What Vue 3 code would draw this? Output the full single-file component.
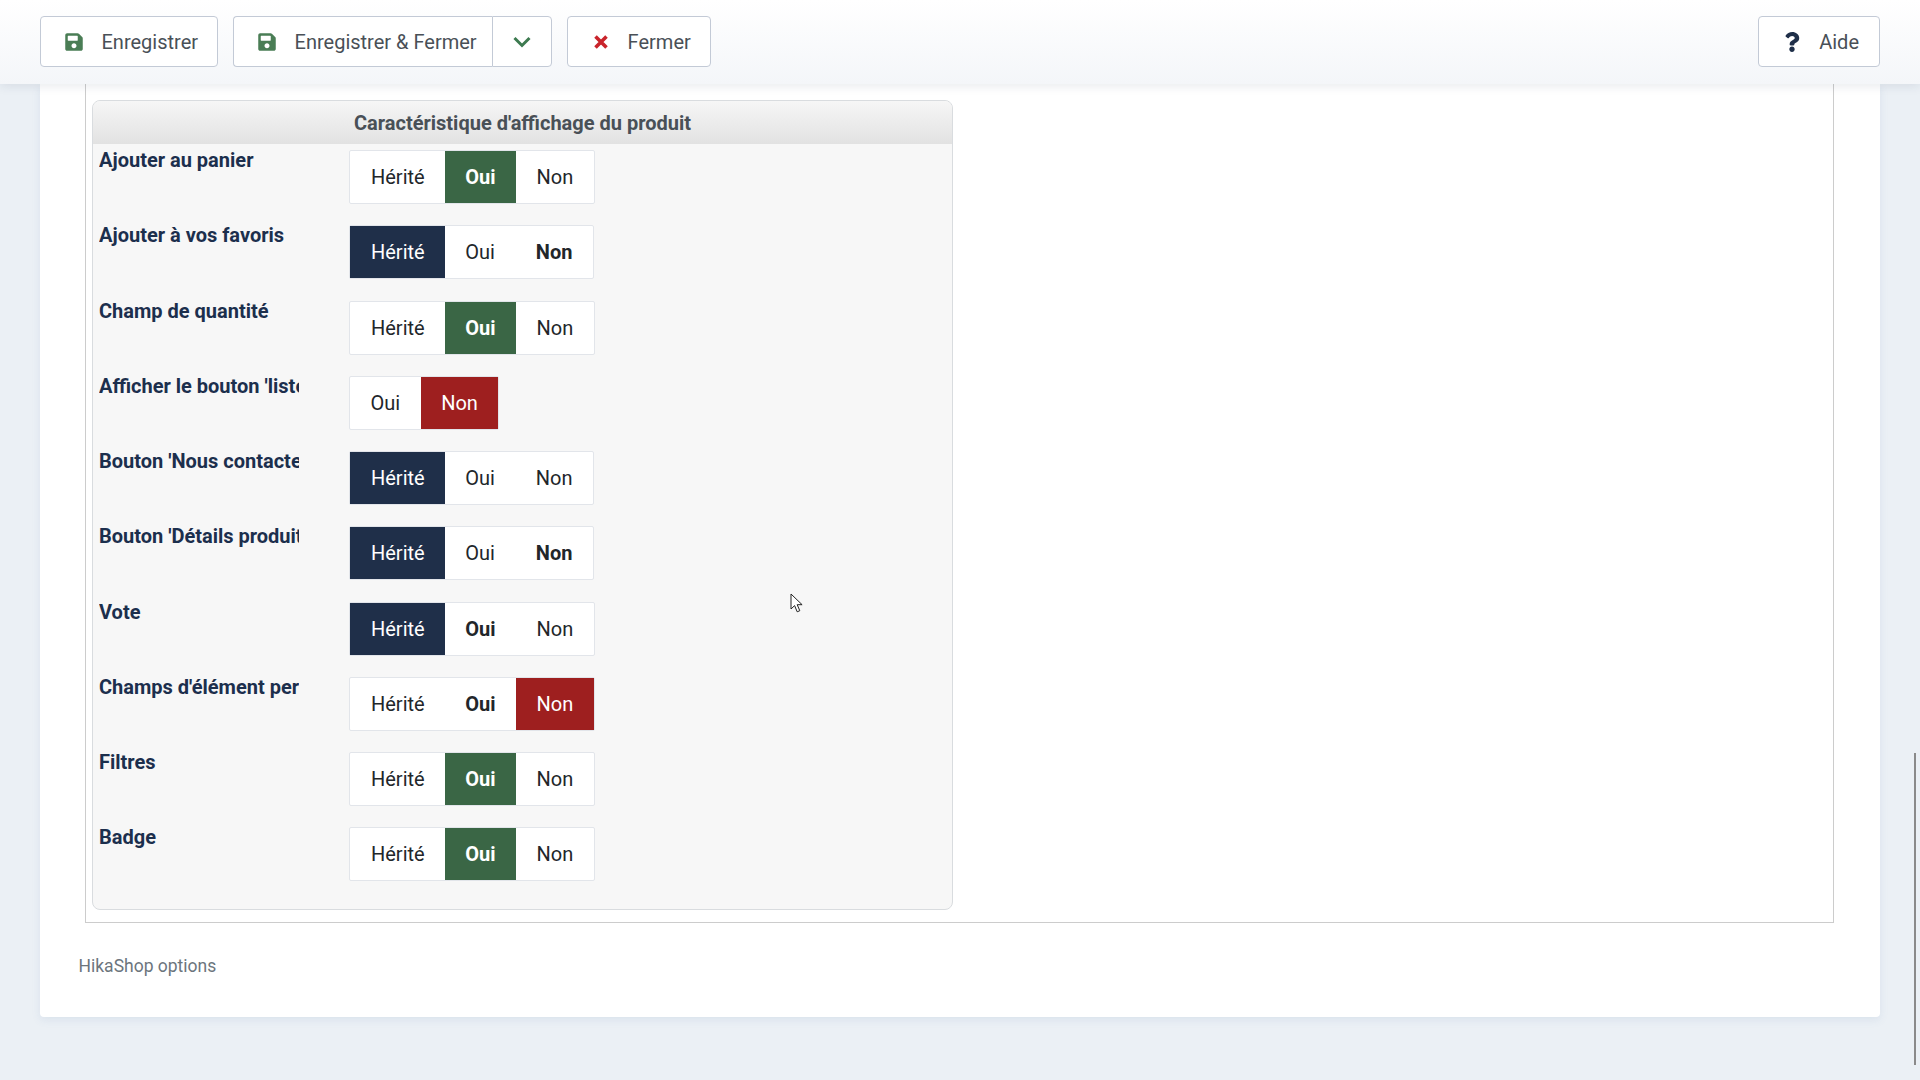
<template>
  <div class="page">
    <header class="toolbar">
      <button class="tb-btn save">
        <svg class="ico" viewBox="0 0 448 512"><path fill="#4a7d55" d="M433.9 129.9l-83.9-83.9A48 48 0 0 0 316.1 32H48C21.5 32 0 53.5 0 80v352c0 26.5 21.5 48 48 48h352c26.5 0 48-21.5 48-48V163.9a48 48 0 0 0-14.1-34zM224 416c-35.3 0-64-28.7-64-64s28.7-64 64-64 64 28.7 64 64-28.7 64-64 64zm96-304.5V212c0 6.6-5.4 12-12 12H76c-6.6 0-12-5.4-12-12V108c0-6.6 5.4-12 12-12h228.5c3.2 0 6.2 1.3 8.5 3.5l3.5 3.5c2.2 2.2 3.5 5.3 3.5 8.5z"/></svg>
        <span>Enregistrer</span>
      </button>
      <div class="split">
        <button class="tb-btn split-main">
          <svg class="ico" viewBox="0 0 448 512"><path fill="#4a7d55" d="M433.9 129.9l-83.9-83.9A48 48 0 0 0 316.1 32H48C21.5 32 0 53.5 0 80v352c0 26.5 21.5 48 48 48h352c26.5 0 48-21.5 48-48V163.9a48 48 0 0 0-14.1-34zM224 416c-35.3 0-64-28.7-64-64s28.7-64 64-64 64 28.7 64 64-28.7 64-64 64zm96-304.5V212c0 6.6-5.4 12-12 12H76c-6.6 0-12-5.4-12-12V108c0-6.6 5.4-12 12-12h228.5c3.2 0 6.2 1.3 8.5 3.5l3.5 3.5c2.2 2.2 3.5 5.3 3.5 8.5z"/></svg>
          <span>Enregistrer &amp; Fermer</span>
        </button>
        <button class="split-arrow">
          <svg width="18" height="12" viewBox="0 0 18 12"><path d="M1.5 2 9 9.5 16.5 2" fill="none" stroke="#3d7a50" stroke-width="3"/></svg>
        </button>
      </div>
      <button class="tb-btn close">
        <svg class="ico-x" viewBox="0 0 16 16"><path d="M2.5 2.5l11 11M13.5 2.5l-11 11" fill="none" stroke="#c9242b" stroke-width="3.6"/></svg>
        <span>Fermer</span>
      </button>
      <button class="tb-btn help">
        <svg class="ico" viewBox="0 0 384 512"><path fill="#1f2f49" d="M202.021 0C122.202 0 70.503 32.703 29.914 91.026c-7.363 10.58-5.093 25.086 5.178 32.874l43.138 32.709c10.373 7.865 25.132 6.026 33.253-4.148 25.049-31.381 43.63-49.449 82.757-49.449 30.764 0 68.816 19.799 68.816 49.631 0 22.552-18.617 34.134-48.993 51.164-35.423 19.86-82.299 44.576-82.299 106.405V320c0 13.255 10.745 24 24 24h72.471c13.255 0 24-10.745 24-24v-5.773c0-42.86 125.268-44.645 125.268-160.627C377.504 66.256 286.902 0 202.021 0zM192 373.459c-38.196 0-69.271 31.075-69.271 69.271 0 38.195 31.075 69.27 69.271 69.27s69.271-31.075 69.271-69.271-31.075-69.27-69.271-69.27z"/></svg>
        <span>Aide</span>
      </button>
    </header>

    <main class="card">
      <div class="fieldset">
        <div class="box">
          <div class="box-title">Caractéristique d'affichage du produit</div>
          <div class="rows">
            <div v-for="row in rows" :key="row.label" class="row">
              <div class="label">{{ row.label }}</div>
              <div class="toggle">
                <span
                  v-for="opt in row.options"
                  :key="opt"
                  :class="['opt', 'opt-' + opt, row.active === opt ? 'on' : '', row.bold === opt ? 'bold' : '']"
                >{{ names[opt] }}</span>
              </div>
            </div>
          </div>
        </div>
      </div>
      <div class="footnote">HikaShop options</div>
    </main>

    <div class="scrollbar"></div>
    <svg class="cursor" width="14" height="21" viewBox="0 0 14 21"><path d="M1 1v15l3.6-3.4 2.6 6.2 2.6-1.1-2.6-6h4.9z" fill="#fff" stroke="#222" stroke-width="1"/></svg>
  </div>
</template>

<script setup>
const names = { h: 'Hérité', o: 'Oui', n: 'Non' }
const all = ['h', 'o', 'n']

const rows = [
  { label: 'Ajouter au panier', options: all, active: 'o', bold: 'o' },
  { label: 'Ajouter à vos favoris', options: all, active: 'h', bold: 'n' },
  { label: 'Champ de quantité', options: all, active: 'o', bold: 'o' },
  { label: "Afficher le bouton 'liste de souhaits'", options: ['o', 'n'], active: 'n' },
  { label: "Bouton 'Nous contacter'", options: all, active: 'h' },
  { label: "Bouton 'Détails produit'", options: all, active: 'h', bold: 'n' },
  { label: 'Vote', options: all, active: 'h', bold: 'o' },
  { label: "Champs d'élément personnalisé", options: all, active: 'n', bold: 'o' },
  { label: 'Filtres', options: all, active: 'o', bold: 'o' },
  { label: 'Badge', options: all, active: 'o', bold: 'o' }
]
</script>

<style>
html, body {
  margin: 0;
  background: #ebf0f5;
}
</style>

<style scoped>
.page {
  position: relative;
  width: 1920px;
  height: 1080px;
  overflow: hidden;
  background: #ebf0f5;
  font-family: Roboto, sans-serif;
  font-size: 20px;
  color: #22262a;
}

.toolbar {
  position: relative;
  z-index: 2;
  display: flex;
  align-items: flex-start;
  gap: 15px;
  box-sizing: border-box;
  height: 84px;
  padding: 16px 40px 0;
  background: linear-gradient(180deg, #ffffff, #f4f6f9);
  box-shadow: 0 2px 10px rgba(30, 50, 80, 0.1);
}

.tb-btn {
  display: flex;
  align-items: center;
  gap: 19px;
  box-sizing: border-box;
  height: 51px;
  padding: 0 20px 0 24px;
  background: #fff;
  border: 1px solid #c3cad6;
  border-radius: 4px;
  font: inherit;
  color: #495057;
}

.save {
  gap: 18.5px;
  padding-right: 18.5px;
}

.close {
  padding-left: 25px;
  padding-right: 19px;
}

.ico {
  width: 18px;
  height: 20px;
}

.ico-x {
  width: 16px;
  height: 16px;
}

.split {
  display: flex;
}

.split-main {
  padding-right: 15px;
  border-radius: 4px 0 0 4px;
  border-right: 0;
}

.split-arrow {
  display: flex;
  align-items: center;
  justify-content: center;
  box-sizing: border-box;
  width: 60px;
  height: 51px;
  padding: 0;
  background: #fff;
  border: 1px solid #c3cad6;
  border-radius: 0 4px 4px 0;
}

.help {
  gap: 18px;
  margin-left: auto;
  padding-right: 20px;
}

.card {
  box-sizing: border-box;
  width: 1840px;
  height: 933px;
  margin-left: 40px;
  padding: 0 46px 0 45px;
  background: #fff;
  border-radius: 0 0 4px 4px;
  box-shadow: 0 3px 8px rgba(100, 130, 180, 0.12);
}

.fieldset {
  box-sizing: border-box;
  height: 839px;
  padding: 16px 6px 12px;
  border: 1px solid #cccccc;
  border-top: 0;
}

.box {
  box-sizing: border-box;
  width: 861px;
  height: 810px;
  background: #f7f7f7;
  border: 1px solid #d9dcdf;
  border-radius: 8px;
  overflow: hidden;
}

.box-title {
  height: 43px;
  line-height: 44px;
  text-align: center;
  font-weight: 700;
  color: #495057;
  background: linear-gradient(180deg, #f6f6f6, #e2e2e2);
}

.rows {
  padding: 4px 6px 0;
}

.row {
  display: flex;
  height: 75.25px;
}

.label {
  width: 200px;
  margin-right: 50px;
  white-space: nowrap;
  overflow: hidden;
  font-weight: 700;
  color: #1c2f4d;
  line-height: 24px;
  height: 24px;
}

.toggle {
  display: flex;
  align-self: flex-start;
  height: 52px;
  margin-top: 2px;
  background: #fff;
  border: 1px solid #e2e5ea;
  border-radius: 2px;
}

.opt {
  display: flex;
  align-items: center;
  padding: 0 20.5px;
  color: #22262a;
}

.opt-h {
  padding: 0 20px 0 21px;
}

.bold {
  font-weight: 700;
}

.opt-h.on {
  background: #1f2f49;
  color: #fff;
}

.opt-o.on {
  background: #3a6645;
  color: #fff;
}

.opt-n.on {
  background: #9e1f1f;
  color: #fff;
}

.footnote {
  margin-top: 33px;
  margin-left: -6.5px;
  font-size: 17.5px;
  color: #6c757d;
}

.scrollbar {
  position: absolute;
  top: 753px;
  right: 4px;
  width: 2px;
  height: 312px;
  background: #8a8a8a;
}

.cursor {
  position: absolute;
  left: 790px;
  top: 593px;
}
</style>
